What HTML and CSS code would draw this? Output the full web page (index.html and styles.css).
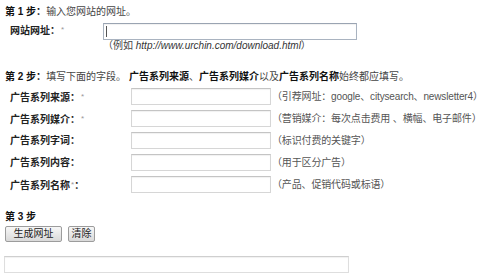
FILE: index.html
```html
<!DOCTYPE html>
<html lang="zh-CN">
<head>
<meta charset="utf-8">
<title>网址生成工具</title>
<link rel="stylesheet" href="styles.css">
</head>
<body>
<div class="form">
  <p class="step"><b>第 1 步：</b>输入您网站的网址。</p>
  <div class="url-row">
    <label class="lbl">网站网址：<span class="req">*</span></label>
    <div class="url-col">
      <div class="field-wrap"><input class="inp inp-url" type="text"><span class="caret"></span></div>
      <div class="example">（例如 <i>http://www.urchin.com/download.html</i>）</div>
    </div>
  </div>

  <p class="step step2"><b>第 2 步：</b>填写下面的字段。 <b>广告系列来源</b>、<b>广告系列媒介</b>以及<b>广告系列名称</b>始终都应填写。</p>
  <div class="fields">
    <label class="lbl">广告系列来源：<span class="req">*</span></label>
    <input class="inp inp-field" type="text">
    <span class="hint">（引荐网址：google、citysearch、newsletter4）</span>

    <label class="lbl">广告系列媒介：<span class="req">*</span></label>
    <input class="inp inp-field" type="text">
    <span class="hint">（营销媒介：每次点击费用 、横幅、电子邮件）</span>

    <label class="lbl">广告系列字词：</label>
    <input class="inp inp-field" type="text">
    <span class="hint">（标识付费的关键字）</span>

    <label class="lbl">广告系列内容：</label>
    <input class="inp inp-field" type="text">
    <span class="hint">（用于区分广告）</span>

    <label class="lbl">广告系列名称<span class="req">*</span>：</label>
    <input class="inp inp-field" type="text">
    <span class="hint">（产品、促销代码或标语）</span>
  </div>

  <p class="step step3"><b>第 3 步</b></p>
  <div class="buttons">
    <button class="btn btn-gen" type="button">生成网址</button>
    <button class="btn btn-clear" type="button">清除</button>
  </div>
  <input class="inp inp-result" type="text">
</div>
</body>
</html>
```

FILE: styles.css
```css
html, body {
  margin: 0;
  padding: 0;
  background: #ffffff;
}

body {
  font-family: "Liberation Sans", "Noto Sans CJK SC", sans-serif;
  font-size: 10px;
  color: #333;
}

.form {
  padding: 6px 0 0 5px;
}

.step {
  margin: 0;
  line-height: 12px;
  height: 12px;
  color: #444;
  white-space: nowrap;
}

.step b {
  color: #111;
}

.lbl {
  font-weight: bold;
  color: #222;
  line-height: 17px;
  white-space: nowrap;
  padding-left: 5px;
}

.req {
  font-weight: normal;
  color: #999;
  font-size: 8px;
  vertical-align: 2px;
  margin-left: 1px;
}

.url-row {
  display: grid;
  grid-template-columns: 98px 254px;
  margin-top: 5px;
}

.url-row .lbl {
  line-height: 14px;
}

.field-wrap {
  position: relative;
  height: 17px;
}

.caret {
  position: absolute;
  left: 3px;
  top: 3px;
  width: 1px;
  height: 11px;
  background: #555;
}

.inp {
  box-sizing: border-box;
  height: 17px;
  margin: 0;
  padding: 0 2px;
  border: 1px solid #d6d6d6;
  border-top-color: #c4c4c4;
  background: #fff;
  box-shadow: inset 0 1px 1px rgba(0, 0, 0, 0.06);
  font: inherit;
  display: block;
}

.inp-url {
  width: 254px;
  border-color: #a9b3c0;
  border-top-color: #9aa4b2;
}

.example {
  line-height: 12px;
  color: #444;
  white-space: nowrap;
}

.example i {
  color: #333;
}

.step2 {
  margin-top: 19px;
}

.fields {
  display: grid;
  grid-template-columns: 126px 140px auto;
  grid-auto-rows: 17px;
  row-gap: 5px;
  column-gap: 0;
  margin-top: 5px;
  align-items: center;
}

.inp-field {
  width: 140px;
}

.hint {
  padding-left: 1px;
  color: #555;
  white-space: nowrap;
  line-height: 17px;
  letter-spacing: -0.15px;
}

.step3 {
  margin-top: 18px;
}

.buttons {
  display: flex;
  gap: 6px;
  margin-top: 3px;
}

.btn {
  box-sizing: border-box;
  height: 16px;
  margin: 0;
  padding: 0;
  border: 1px solid #9c9c9c;
  border-radius: 2px;
  background: linear-gradient(#f7f7f7, #d9d9d9);
  font: inherit;
  color: #222;
  line-height: 14px;
}

.btn-gen {
  width: 57px;
}

.btn-clear {
  width: 27px;
}

.inp-result {
  width: 345px;
  margin: 14px 0 0 -1px;
  border-color: #dedede;
  border-top-color: #cfcfcf;
}
```
